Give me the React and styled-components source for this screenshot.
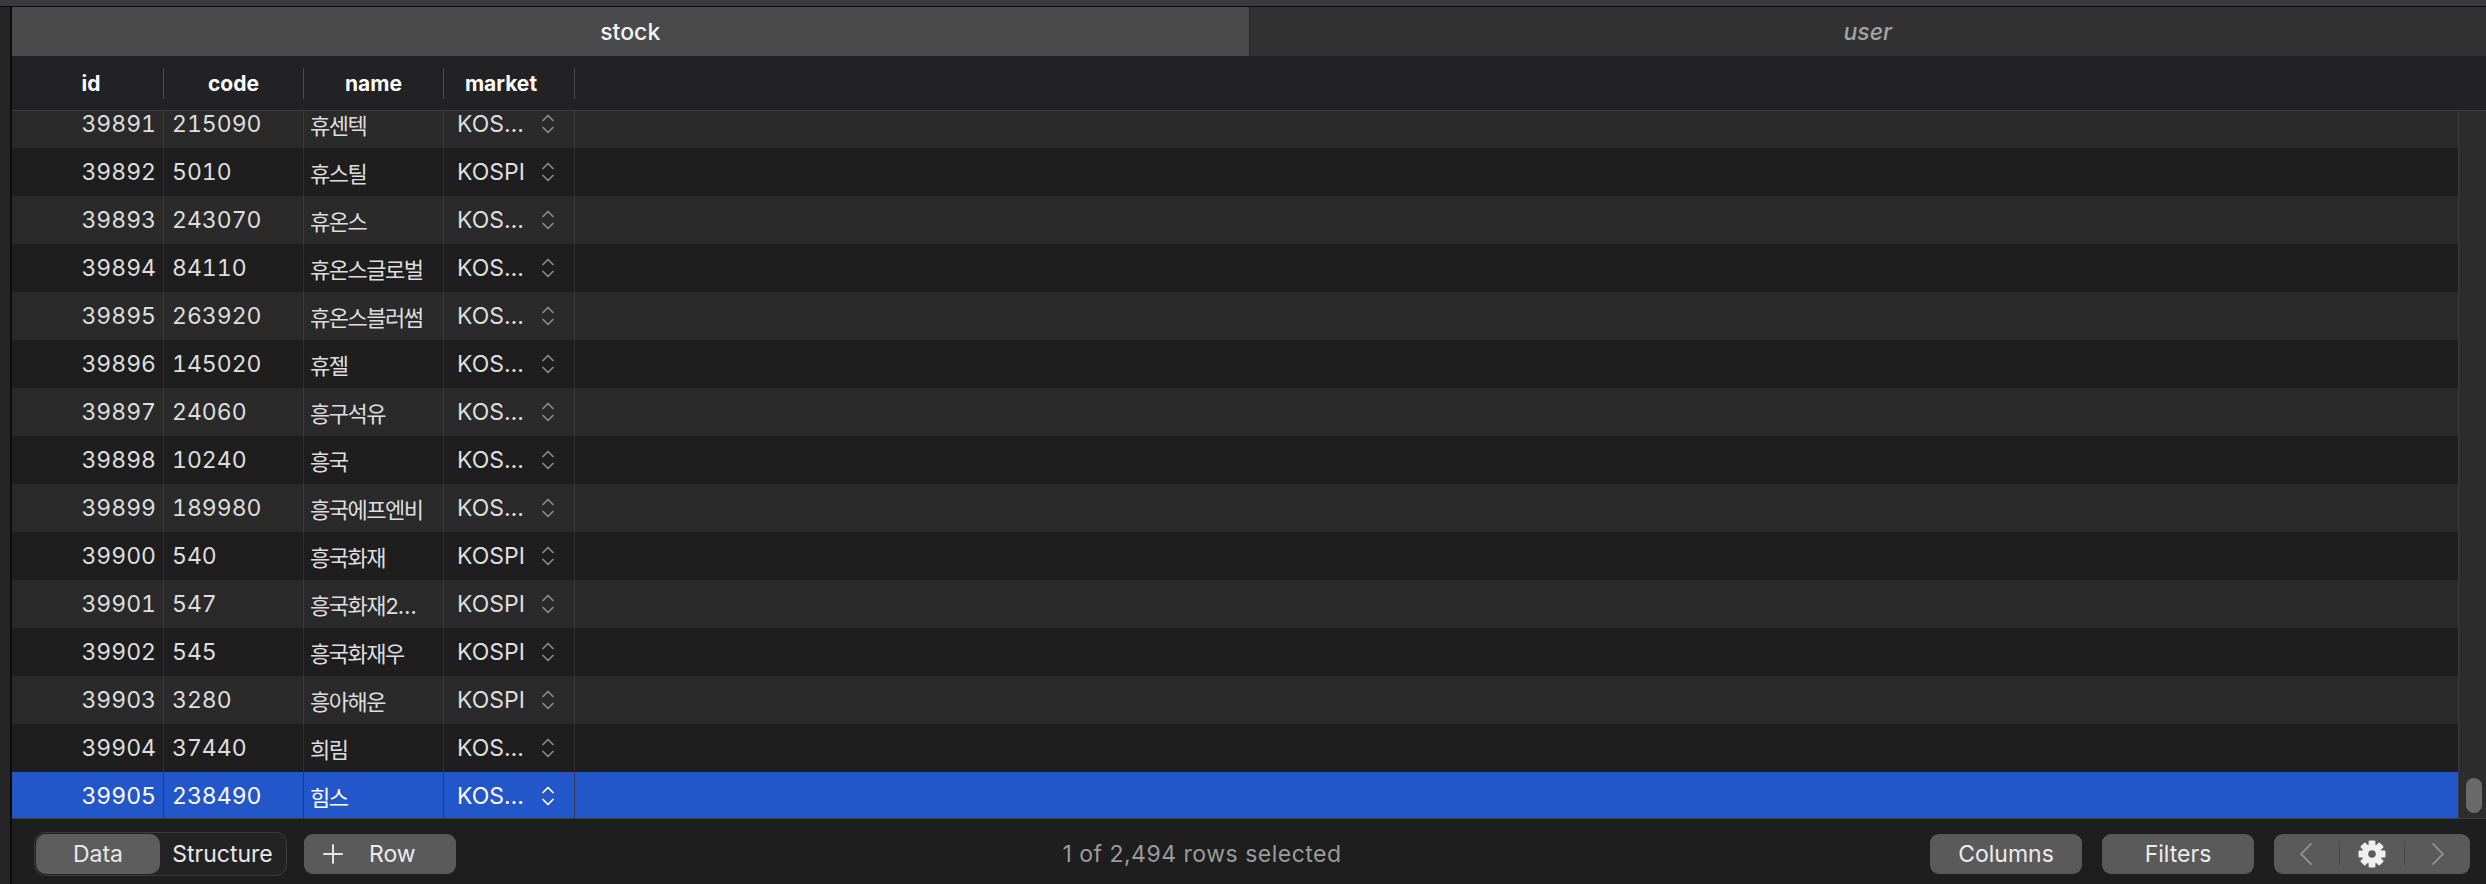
import React from 'react';
import styled, { createGlobalStyle } from 'styled-components';

const GlobalStyle = createGlobalStyle`
  html, body {
    margin: 0;
    padding: 0;
    background: #1e1e1e;
  }
  body {
    font-family: Inter, "Noto Sans CJK KR", sans-serif;
    -webkit-font-smoothing: antialiased;
  }
  * {
    box-sizing: border-box;
  }
`;

const Window = styled.div`
  width: 2486px;
  height: 884px;
  display: flex;
  flex-direction: column;
  overflow: hidden;
  background: #1e1e1e;
`;

const TitleStrip = styled.div`
  height: 7px;
  flex: none;
  background: #3a393c;
  border-bottom: 1px solid #0c0c0c;
`;

const Body = styled.div`
  flex: 1;
  display: flex;
  min-height: 0;
`;

const Gutter = styled.div`
  width: 12px;
  flex: none;
  background: #262626;
  border-right: 2px solid #0a0a0a;
`;

const Main = styled.div`
  flex: 1;
  display: flex;
  flex-direction: column;
  min-width: 0;
`;

const TabBar = styled.div`
  height: 49px;
  flex: none;
  display: flex;
`;

const Tab = styled.div`
  flex: 1;
  display: flex;
  align-items: center;
  justify-content: center;
  background: ${(p) => (p.$active ? '#4a4a4a' : '#323232')};
  color: ${(p) => (p.$active ? '#f4f4f4' : '#a4a4a4')};
  font-style: ${(p) => (p.$active ? 'normal' : 'italic')};
  font-size: 23px;
  font-weight: 500;

  & + & {
    border-left: 1px solid #232323;
  }
`;

const Header = styled.div`
  height: 55px;
  flex: none;
  display: flex;
  align-items: center;
  background: #222124;
  border-bottom: 1px solid #3b3a3d;
`;

const HeadCell = styled.div`
  width: ${(p) => p.$w}px;
  height: 31px;
  flex: none;
  display: flex;
  align-items: center;
  justify-content: center;
  padding: ${(p) => p.$pad || '0'};
  border-right: 1px solid #4a494c;
  color: #ffffff;
  font-size: 21px;
  font-weight: 700;
`;

const TableArea = styled.div`
  flex: 1;
  min-height: 0;
  display: flex;
`;

const Viewport = styled.div`
  flex: 1;
  overflow: hidden;
`;

const RowList = styled.div`
  margin-top: -11px;
`;

const Row = styled.div`
  height: 48px;
  display: flex;
  background: ${(p) => (p.$selected ? '#2357c9' : p.$alt ? '#2a2a2a' : '#1e1e1e')};
  color: ${(p) => (p.$selected ? '#ffffff' : '#dedede')};
`;

const Cell = styled.div`
  width: ${(p) => p.$w}px;
  flex: none;
  display: flex;
  align-items: center;
  justify-content: ${(p) => p.$justify || 'flex-start'};
  padding: ${(p) => p.$pad || '0'};
  border-right: 1px solid ${(p) => (p.$selected ? '#2f3a52' : 'rgba(255,255,255,0.08)')};
  font-size: 23px;
  font-variant-numeric: tabular-nums;
  white-space: nowrap;
  overflow: hidden;
`;

const NameText = styled.span`
  font-size: 22px;
  letter-spacing: -1.5px;
`;

const ScrollTrack = styled.div`
  width: 28px;
  flex: none;
  display: flex;
  flex-direction: column;
  justify-content: flex-end;
  align-items: flex-start;
  padding: 0 0 5px 7px;
  background: #2c2c2c;
  border-left: 1px solid #3c3c3c;
`;

const Thumb = styled.div`
  width: 16px;
  height: 35px;
  border-radius: 8px;
  background: #6a6a6a;
`;

const BottomBar = styled.div`
  height: 66px;
  flex: none;
  display: flex;
  align-items: center;
  padding: 13px 16px 8px 22px;
  border-top: 1px solid #3a3c42;
  background: #1e1e1e;
`;

const Segmented = styled.div`
  height: 44px;
  display: flex;
  padding: 1px;
  border: 1px solid #3c3c3c;
  border-radius: 11px;
  background: #232323;
`;

const Segment = styled.div`
  width: ${(p) => p.$w}px;
  display: flex;
  align-items: center;
  justify-content: center;
  border-radius: 10px;
  background: ${(p) => (p.$active ? '#5d5d5d' : 'transparent')};
  color: #e8e8e8;
  font-size: 23px;
`;

const Button = styled.button`
  width: ${(p) => p.$w || 152}px;
  height: 40px;
  margin-left: ${(p) => p.$ml || 0}px;
  display: flex;
  align-items: center;
  justify-content: ${(p) => p.$justify || 'center'};
  gap: 26px;
  padding: ${(p) => p.$pad || '0'};
  border: none;
  border-radius: 9px;
  background: #5a5a5a;
  color: #ececec;
  font-family: inherit;
  font-size: 23px;
`;

const Status = styled.div`
  flex: 1;
  padding-left: 18px;
  text-align: center;
  color: #9b9b9b;
  font-size: 23px;
  letter-spacing: 0.5px;
`;

const RightGroup = styled.div`
  display: flex;
  align-items: center;
  gap: 20px;
`;

const NavGroup = styled.div`
  width: 196px;
  height: 40px;
  display: flex;
  align-items: center;
  border-radius: 9px;
  background: #5a5a5a;
`;

const NavSeg = styled.div`
  flex: 1;
  height: 100%;
  display: flex;
  align-items: center;
  justify-content: center;
`;

const NavDivider = styled.div`
  width: 1px;
  height: 24px;
  background: #474747;
`;

const rows = [
  [39891, '215090', '휴센텍', 'KOS…'],
  [39892, '5010', '휴스틸', 'KOSPI'],
  [39893, '243070', '휴온스', 'KOS…'],
  [39894, '84110', '휴온스글로벌', 'KOS…'],
  [39895, '263920', '휴온스블러썸', 'KOS…'],
  [39896, '145020', '휴젤', 'KOS…'],
  [39897, '24060', '흥구석유', 'KOS…'],
  [39898, '10240', '흥국', 'KOS…'],
  [39899, '189980', '흥국에프엔비', 'KOS…'],
  [39900, '540', '흥국화재', 'KOSPI'],
  [39901, '547', '흥국화재2…', 'KOSPI'],
  [39902, '545', '흥국화재우', 'KOSPI'],
  [39903, '3280', '흥아해운', 'KOSPI'],
  [39904, '37440', '희림', 'KOS…'],
  [39905, '238490', '힘스', 'KOS…'],
];

const Stepper = ({ color }) => (
  <svg width="14" height="22" viewBox="0 0 14 22" fill="none" stroke={color} strokeWidth="1.7" strokeLinecap="round" strokeLinejoin="round">
    <path d="M2 7.5 L7 2.5 L12 7.5" />
    <path d="M2 14.5 L7 19.5 L12 14.5" />
  </svg>
);

const Chevron = ({ dir }) => (
  <svg width="14" height="24" viewBox="0 0 14 24" fill="none" stroke="#8e8e8e" strokeWidth="1.8" strokeLinecap="round" strokeLinejoin="round">
    <path d={dir === 'left' ? 'M12 2 L2 12 L12 22' : 'M2 2 L12 12 L2 22'} />
  </svg>
);

const Gear = () => (
  <svg width="30" height="30" viewBox="0 0 30 30">
    <g fill="#efefef">
      {[0, 45, 90, 135].map((a) => (
        <rect key={a} x="11.6" y="1.5" width="6.8" height="27" rx="1.2" transform={`rotate(${a} 15 15)`} />
      ))}
      <circle cx="15" cy="15" r="9.8" />
    </g>
    <circle cx="15" cy="15" r="3.8" fill="#5a5a5a" />
  </svg>
);

const Plus = () => (
  <svg width="20" height="20" viewBox="0 0 20 20" stroke="#e4e4e4" strokeWidth="2" strokeLinecap="round">
    <path d="M10 1 V19 M1 10 H19" />
  </svg>
);

const App = () => {
  return (
    <Window>
      <GlobalStyle />
      <TitleStrip />
      <Body>
        <Gutter />
        <Main>
          <TabBar>
            <Tab $active>stock</Tab>
            <Tab>user</Tab>
          </TabBar>
          <Header>
            <HeadCell $w={152} $pad="0 0 0 7px">id</HeadCell>
            <HeadCell $w={140}>code</HeadCell>
            <HeadCell $w={140}>name</HeadCell>
            <HeadCell $w={131} $pad="0 16px 0 0">market</HeadCell>
          </Header>
          <TableArea>
            <Viewport>
              <RowList>
                {rows.map(([id, code, name, market]) => {
                  const selected = id === 39905;
                  return (
                    <Row key={id} $alt={id % 2 === 1} $selected={selected}>
                      <Cell $w={152} $justify="flex-end" $pad="0 7px 0 0" $selected={selected}>{id}</Cell>
                      <Cell $w={140} $pad="0 0 0 8px" $selected={selected}>{code}</Cell>
                      <Cell $w={140} $pad="0 0 0 6px" $selected={selected}>
                        <NameText>{name}</NameText>
                      </Cell>
                      <Cell $w={131} $justify="space-between" $pad="0 19px 0 13px" $selected={selected}>
                        <span>{market}</span>
                        <Stepper color={selected ? '#ffffff' : '#8a8a8a'} />
                      </Cell>
                    </Row>
                  );
                })}
              </RowList>
            </Viewport>
            <ScrollTrack>
              <Thumb />
            </ScrollTrack>
          </TableArea>
          <BottomBar>
            <Segmented>
              <Segment $w={124} $active>Data</Segment>
              <Segment $w={125}>Structure</Segment>
            </Segmented>
            <Button $ml={17} $justify="flex-start" $pad="0 0 0 19px">
              <Plus />
              <span>Row</span>
            </Button>
            <Status>1 of 2,494 rows selected</Status>
            <RightGroup>
              <Button>Columns</Button>
              <Button>Filters</Button>
              <NavGroup>
                <NavSeg><Chevron dir="left" /></NavSeg>
                <NavDivider />
                <NavSeg><Gear /></NavSeg>
                <NavDivider />
                <NavSeg><Chevron dir="right" /></NavSeg>
              </NavGroup>
            </RightGroup>
          </BottomBar>
        </Main>
      </Body>
    </Window>
  );
};

export default App;
